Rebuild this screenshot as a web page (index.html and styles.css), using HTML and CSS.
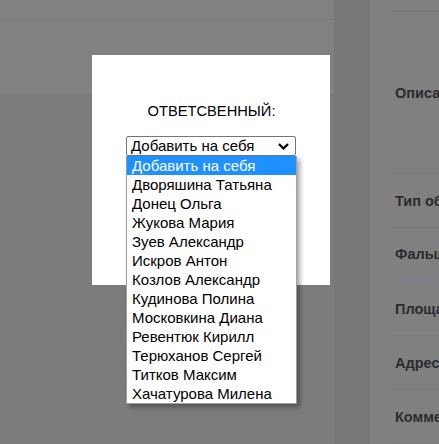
FILE: index.html
```html
<!DOCTYPE html>
<html lang="ru">
<head>
<meta charset="utf-8">
<title>Ответственный</title>
<link rel="stylesheet" href="styles.css">
</head>
<body>
<div class="page">
  <div class="main">
    <div class="topbar"></div>
    <div class="band"></div>
    <div class="rest"></div>
  </div>
  <div class="gutter"></div>
  <div class="side">
    <div class="side-top"></div>
    <div class="row row-first"><span class="label">Описание</span></div>
    <div class="row"><span class="label">Тип объекта</span></div>
    <div class="row row-accent"><span class="label">Фальшпол</span></div>
    <div class="row"><span class="label">Площадь</span></div>
    <div class="row"><span class="label">Адрес</span></div>
    <div class="row"><span class="label">Комментарий</span></div>
  </div>

  <div class="modal">
    <div class="modal-title">ОТВЕТСВЕННЫЙ:</div>
    <div class="select-wrap">
      <div class="select-box">
        <span class="select-value">Добавить на себя</span>
        <svg class="chevron" width="11" height="7" viewBox="0 0 11 7"><path d="M1 1 L5.5 5.5 L10 1" fill="none" stroke="#000" stroke-width="2.2"/></svg>
      </div>
      <ul class="options">
        <li class="option selected">Добавить на себя</li>
        <li class="option">Дворяшина Татьяна</li>
        <li class="option">Донец Ольга</li>
        <li class="option">Жукова Мария</li>
        <li class="option">Зуев Александр</li>
        <li class="option">Искров Антон</li>
        <li class="option">Козлов Александр</li>
        <li class="option">Кудинова Полина</li>
        <li class="option">Московкина Диана</li>
        <li class="option">Ревентюк Кирилл</li>
        <li class="option">Терюханов Сергей</li>
        <li class="option">Титков Максим</li>
        <li class="option">Хачатурова Милена</li>
      </ul>
    </div>
  </div>
</div>
</body>
</html>
```

FILE: styles.css
```css
html, body {
  margin: 0;
  padding: 0;
}
body {
  width: 439px;
  height: 444px;
  overflow: hidden;
  font-family: "Liberation Sans", Arial, sans-serif;
  background: #808080;
}
.page {
  position: relative;
  display: grid;
  grid-template-columns: 334px 36px 1fr;
  height: 444px;
}
.main {
  display: flex;
  flex-direction: column;
}
.topbar {
  height: 19px;
  background: #828282;
  border-bottom: 1px solid #7a7a7a;
}
.band {
  height: 73px;
  background: #828282;
}
.rest {
  flex: 1;
  background: #7b7c7e;
}
.gutter {
  background: #77787a;
}
.side {
  background: #808080;
  padding-left: 20px;
  display: flex;
  flex-direction: column;
  overflow: hidden;
}
.side-top {
  height: 10px;
  border-bottom: 2px solid #7a7b7d;
}
.row {
  height: 53px;
  border-bottom: 1px solid #797a7c;
  display: flex;
  align-items: center;
  padding-left: 5px;
  white-space: nowrap;
}
.row-first {
  height: 161px;
  align-items: flex-start;
  padding-top: 0;
}
.row-first .label {
  margin-top: 73px;
}
.row-accent {
  border-bottom: 2px solid #7b8088;
  height: 52px;
}
.label {
  font-weight: bold;
  font-size: 14.5px;
  color: #2a2c2f;
  line-height: 16px;
}
.modal {
  position: absolute;
  left: 92px;
  top: 55px;
  width: 238px;
  height: 230px;
  background: #ffffff;
  display: flex;
  flex-direction: column;
  align-items: center;
  box-sizing: border-box;
  padding-top: 48px;
}
.modal-title {
  font-size: 14.7px;
  line-height: 17px;
  color: #000;
  margin-left: 1px;
}
.select-wrap {
  position: relative;
  margin-top: 16px;
}
.select-box {
  width: 170px;
  height: 20px;
  box-sizing: border-box;
  border: 1px solid #767676;
  border-radius: 2px;
  display: flex;
  align-items: center;
  justify-content: space-between;
  padding: 0 6px 0 4px;
  background: #fff;
}
.select-value {
  font-size: 15px;
  line-height: 18px;
  color: #000;
}
.chevron {
  display: block;
}
.options {
  position: absolute;
  left: 0;
  top: 20px;
  width: 171px;
  margin: 0;
  padding: 0;
  list-style: none;
  background: #fff;
  border: 1px solid #a0a0a0;
  border-top: none;
  box-sizing: border-box;
  box-shadow: 3px 3px 5px rgba(0, 0, 0, 0.35);
}
.option {
  height: 19px;
  line-height: 19px;
  font-size: 15px;
  padding-left: 5px;
  color: #000;
  white-space: nowrap;
}
.option.selected {
  background: #1e90ff;
  color: #fff;
}
```
